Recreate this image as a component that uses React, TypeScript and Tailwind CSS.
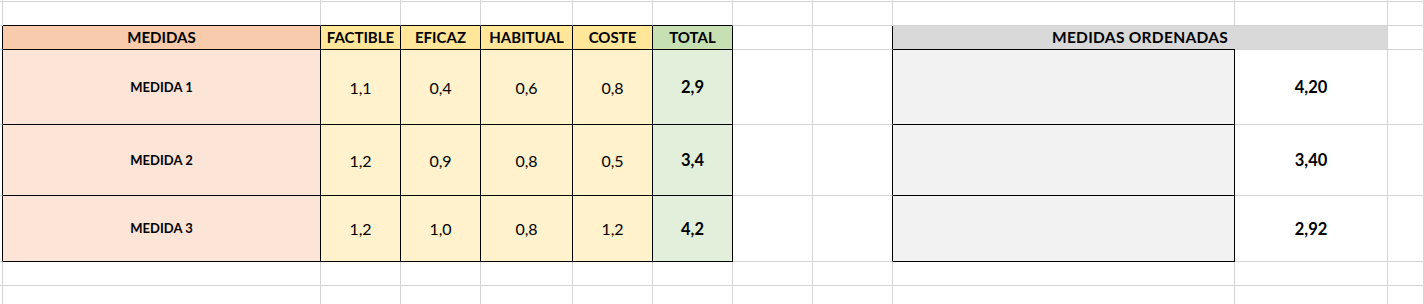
import React from 'react';

const HEAD = ['MEDIDAS', 'FACTIBLE', 'EFICAZ', 'HABITUAL', 'COSTE', 'TOTAL'];

const DATA = [
  { name: 'MEDIDA 1', vals: ['1,1', '0,4', '0,6', '0,8'], total: '2,9', ord: '4,20' },
  { name: 'MEDIDA 2', vals: ['1,2', '0,9', '0,8', '0,5'], total: '3,4', ord: '3,40' },
  { name: 'MEDIDA 3', vals: ['1,2', '1,0', '0,8', '1,2'], total: '4,2', ord: '2,92' },
];

const ROW_COUNT = 8;
const COL_COUNT = 12;

// cells that carry a thin black border on every side
const isBlack = (r: number, c: number) =>
  (r >= 2 && r <= 5 && c >= 1 && c <= 6) || (r >= 3 && r <= 5 && c === 9);

const bgFor = (r: number, c: number) => {
  if (r === 2) {
    if (c === 1) return 'bg-[#f8cbad]';
    if (c >= 2 && c <= 5) return 'bg-[#ffe699]';
    if (c === 6) return 'bg-[#c6e0b4]';
  }
  if (r >= 3 && r <= 5) {
    if (c === 1) return 'bg-[#fce4d6]';
    if (c >= 2 && c <= 5) return 'bg-[#fff2cc]';
    if (c === 6) return 'bg-[#e2efda]';
    if (c === 9) return 'bg-[#f2f2f2]';
  }
  return 'bg-white';
};

const contentFor = (r: number, c: number) => {
  if (r === 2 && c >= 1 && c <= 6) {
    return <span className="text-[15px] font-bold">{HEAD[c - 1]}</span>;
  }
  if (r >= 3 && r <= 5) {
    const d = DATA[r - 3];
    if (c === 1) return <span className="mt-px text-[13px] font-bold">{d.name}</span>;
    if (c >= 2 && c <= 5) return <span className="mt-px text-[16px]">{d.vals[c - 2]}</span>;
    if (c === 6) return <span className="mt-px text-[16.5px] font-bold">{d.total}</span>;
    if (c === 10) return <span className="mt-px text-[16.5px] font-bold">{d.ord}</span>;
  }
  return null;
};

const Cell: React.FC<{ r: number; c: number }> = ({ r, c }) => {
  const right = isBlack(r, c) || isBlack(r, c + 1) || (r === 2 && c === 8);
  const bottom = isBlack(r, c) || isBlack(r + 1, c);
  return (
    <div
      className={`flex items-center justify-center overflow-hidden border-r border-b ${
        right ? 'border-r-black' : 'border-r-[#d4d4d4]'
      } ${bottom ? 'border-b-black' : 'border-b-[#d4d4d4]'} ${bgFor(r, c)}`}
    >
      {contentFor(r, c)}
    </div>
  );
};

const App: React.FC = () => {
  const cells: React.ReactNode[] = [];
  for (let r = 0; r < ROW_COUNT; r++) {
    for (let c = 0; c < COL_COUNT; c++) {
      if (r === 2 && c === 10) continue;
      if (r === 2 && c === 9) {
        // merged "MEDIDAS ORDENADAS" header
        cells.push(
          <div key={`${r}-${c}`} className="col-span-2 flex flex-col bg-[#d9d9d9] border-r border-r-[#d4d4d4]">
            <div className="flex flex-1 items-center justify-center">
              <span className="text-[15.5px] font-bold tracking-[0.3px]">MEDIDAS ORDENADAS</span>
            </div>
            <div className="flex h-px">
              <div className="w-[342px] bg-black" />
              <div className="flex-1 bg-[#d4d4d4]" />
            </div>
          </div>
        );
        continue;
      }
      cells.push(<Cell key={`${r}-${c}`} r={r} c={c} />);
    }
  }

  return (
    <div className="h-[304px] w-[1424px] overflow-hidden bg-white font-['Lato',sans-serif] text-black">
      <div className="grid grid-cols-[3px_318px_80px_80px_92px_80px_80px_80px_80px_342px_153px_1fr] grid-rows-[2px_24px_24px_75px_71px_66px_24px_24px]">
        {cells}
      </div>
    </div>
  );
};

export default App;
